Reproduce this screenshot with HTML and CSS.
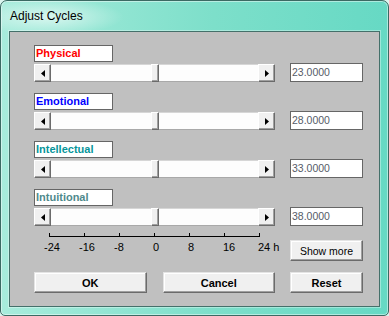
FILE: index.html
```html
<!DOCTYPE html>
<html lang="en">
<head>
    <meta charset="UTF-8">
    <meta name="viewport" content="width=device-width, initial-scale=1.0">
    <title>Adjust Cycles</title>

    <link rel="stylesheet" href="styles.css">
</head>
<body>
    <div class="window">
        <div class="titlebar">Adjust Cycles</div>
        <div class="client">
            <div class="cycles">
                <div class="cycle">
                    <div class="label physical">Physical</div>
                    <div class="scrollbar">
                        <div class="arrow"><svg width="4" height="7"><polygon points="4,0 4,7 0,3.5"/></svg></div>
                        <div class="track"><div class="thumb"></div></div>
                        <div class="arrow"><svg width="4" height="7"><polygon points="0,0 0,7 4,3.5"/></svg></div>
                    </div>
                </div>
                <div class="value">23.0000</div>

                <div class="cycle">
                    <div class="label emotional">Emotional</div>
                    <div class="scrollbar">
                        <div class="arrow"><svg width="4" height="7"><polygon points="4,0 4,7 0,3.5"/></svg></div>
                        <div class="track"><div class="thumb"></div></div>
                        <div class="arrow"><svg width="4" height="7"><polygon points="0,0 0,7 4,3.5"/></svg></div>
                    </div>
                </div>
                <div class="value">28.0000</div>

                <div class="cycle">
                    <div class="label intellectual">Intellectual</div>
                    <div class="scrollbar">
                        <div class="arrow"><svg width="4" height="7"><polygon points="4,0 4,7 0,3.5"/></svg></div>
                        <div class="track"><div class="thumb"></div></div>
                        <div class="arrow"><svg width="4" height="7"><polygon points="0,0 0,7 4,3.5"/></svg></div>
                    </div>
                </div>
                <div class="value">33.0000</div>

                <div class="cycle">
                    <div class="label intuitional">Intuitional</div>
                    <div class="scrollbar">
                        <div class="arrow"><svg width="4" height="7"><polygon points="4,0 4,7 0,3.5"/></svg></div>
                        <div class="track"><div class="thumb"></div></div>
                        <div class="arrow"><svg width="4" height="7"><polygon points="0,0 0,7 4,3.5"/></svg></div>
                    </div>
                </div>
                <div class="value">38.0000</div>
            </div>

            <div class="scale-row">
                <div class="scale">
                    <div class="ticks"></div>
                    <div class="marks">
                        <span class="neg">-24</span>
                        <span class="neg">-16</span>
                        <span class="neg">-8</span>
                        <span>0</span>
                        <span>8</span>
                        <span>16</span>
                        <span>24 h</span>
                    </div>
                </div>
                <button class="btn small">Show more</button>
            </div>

            <div class="buttons">
                <div class="pair">
                    <button class="btn">OK</button>
                    <button class="btn">Cancel</button>
                </div>
                <button class="btn">Reset</button>
            </div>
        </div>
    </div>
</body>
</html>
```

FILE: styles.css
```css
* {
    box-sizing: border-box;
}

body {
    margin: 0;
    background-color: #dcf5ef;
    font-family: "Liberation Sans", Arial, sans-serif;
}

.window {
    display: flex;
    flex-direction: column;
    width: 389px;
    height: 316px;
    padding: 0 8px 8px;
    border: 1px solid #3b6a63;
    border-radius: 7px 7px 5px 5px;
    background:
        radial-gradient(ellipse 75px 18px at 48px 16px, rgba(255, 255, 255, .6), rgba(255, 255, 255, 0)),
        linear-gradient(to right, #a8ecdc, #7ddfca 55%, #66d9c4);
    box-shadow: inset 0 0 0 1px rgba(255, 255, 255, .45);
}

.titlebar {
    height: 30px;
    padding: 8px 0 0 1px;
    font-size: 12px;
    line-height: 14px;
    color: #000;
}

.client {
    flex: 1;
    padding: 13px 16px 0 24px;
    background-color: #c0c0c0;
    border: 1px solid #44706a;
    box-shadow: 0 0 0 1px rgba(255, 255, 255, .35);
}

.cycles {
    display: grid;
    grid-template-columns: 241px 73px;
    column-gap: 15px;
    row-gap: 11px;
}

.cycle {
    display: flex;
    flex-direction: column;
    gap: 2px;
}

.label {
    width: 79px;
    height: 17px;
    padding-left: 1px;
    background-color: #fff;
    border: 1px solid #666;
    font-size: 11px;
    font-weight: bold;
    line-height: 15px;
    white-space: nowrap;
}

.physical {
    color: #ff0000;
}

.emotional {
    color: #0000ff;
}

.intellectual {
    color: #06959a;
}

.intuitional {
    color: #4f8a8c;
}

.scrollbar {
    display: flex;
    height: 18px;
}

.arrow {
    display: flex;
    align-items: center;
    justify-content: center;
    flex: none;
    width: 17px;
    background-color: #f0f0f0;
    border: 1px solid;
    border-color: #fff #6b6b6b #6b6b6b #fff;
    box-shadow: inset -1px -1px #a0a0a0;
}

.arrow svg {
    display: block;
    fill: #000;
}

.track {
    display: flex;
    justify-content: center;
    flex: 1;
    background-color: #fdfdfd;
    border-top: 1px solid #d6d6d6;
    border-bottom: 1px solid #a9a9a9;
}

.thumb {
    width: 8px;
    margin: -1px 0;
    background-color: #f0f0f0;
    border: 1px solid;
    border-color: #fff #6b6b6b #6b6b6b #fff;
    box-shadow: inset -1px -1px #a0a0a0;
}

.value {
    align-self: end;
    height: 19px;
    padding-left: 1px;
    background-color: #fff;
    border: 1px solid #666;
    color: #565c68;
    font-size: 10.5px;
    line-height: 17px;
}

.scale-row {
    display: grid;
    grid-template-columns: 241px 73px;
    column-gap: 15px;
    align-items: start;
    margin-top: 7px;
}

.scale {
    padding-left: 15px;
}

.ticks {
    width: 211px;
    height: 4px;
    border-bottom: 1px solid #000;
    background: repeating-linear-gradient(to right, #000 0 1px, transparent 1px 35px);
}

.marks {
    display: flex;
    margin: 4px 0 0 -1px;
    font-size: 11px;
    line-height: 13px;
    color: #000;
}

.marks span {
    flex: none;
    width: 35px;
    white-space: nowrap;
}

.marks .neg {
    text-indent: -4px;
}

.btn {
    height: 21px;
    padding: 0;
    background-color: #f0f0f0;
    border: 1px solid;
    border-color: #e4e4e4 #6b6b6b #6b6b6b #e4e4e4;
    box-shadow: inset -1px -1px #a0a0a0, inset 1px 1px #fff;
    font-family: "Liberation Sans", Arial, sans-serif;
    font-size: 11px;
    font-weight: bold;
    color: #000;
}

.btn.small {
    margin-top: 7px;
    font-size: 10.5px;
    font-weight: normal;
}

.buttons {
    display: grid;
    grid-template-columns: 241px 73px;
    column-gap: 15px;
    margin-top: 11px;
}

.pair {
    display: grid;
    grid-template-columns: 1fr 1fr;
    gap: 16px;
}
```
